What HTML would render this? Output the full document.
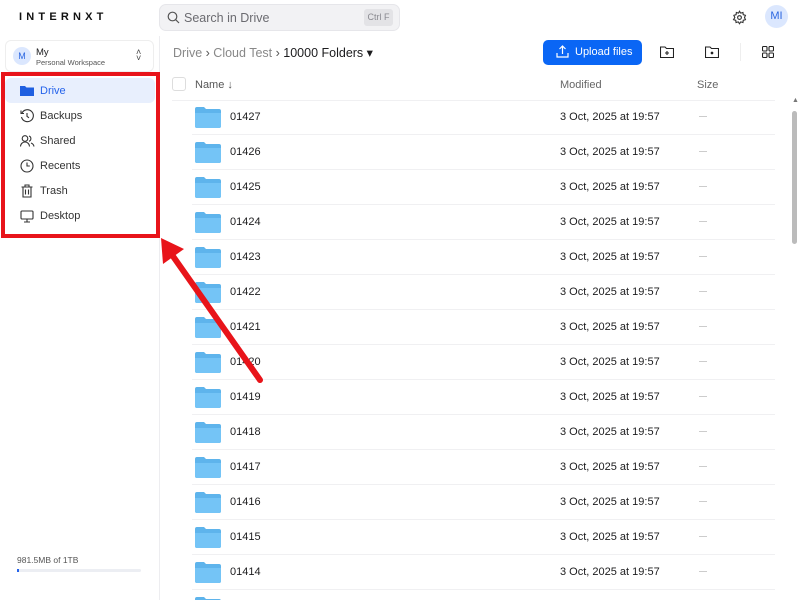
<!DOCTYPE html>
<html><head><meta charset="utf-8"><style>
*{box-sizing:border-box;margin:0;padding:0}
html,body{width:800px;height:600px;overflow:hidden}
body{background:#fff;font-family:"Liberation Sans",sans-serif;color:#1c1c1e;position:relative}
.abs{position:absolute}
.logo{left:19px;top:11px;font-size:11px;font-weight:bold;letter-spacing:4.2px;color:#111}
.search{left:159px;top:4px;width:241px;height:27px;background:#f2f2f4;border:1px solid #e6e6ea;border-radius:7px}
.search span{position:absolute;left:24px;top:6px;font-size:12.5px;color:#6b6b70}
.kbd{position:absolute;right:6px;top:4px;width:29px;height:17px;background:#e3e3e6;border-radius:3px;font-size:9px;color:#8a8a90;text-align:center;line-height:17px}
.ws{left:5px;top:40px;width:149px;height:32px;border:1px solid #eee;border-radius:6px}
.av{width:18px;height:18px;border-radius:50%;background:#dbe7fe;color:#2b66e0;font-size:9px;text-align:center;line-height:18px}
.nav{left:5px;width:150px;height:25px;font-size:11px;color:#333;}
.nav span{position:absolute;left:35px;top:7px}
.nav svg{position:absolute;left:15px;top:6px}
.row{left:192px;width:583px;height:35px;border-bottom:1px solid #f0f0f2}
.row .n{position:absolute;left:38px;top:11px;font-size:11px}
.row .m{position:absolute;left:368px;top:11px;font-size:11px}
.row .s{position:absolute;left:507px;top:16px;width:8px;height:1px;background:#ccc}
.row svg{position:absolute;left:3px;top:6px}
</style></head><body>
<div class="abs logo">INTERNXT</div>
<div class="abs search"><svg class="abs" style="left:7px;top:6px" width="13" height="13" viewBox="0 0 13 13"><circle cx="5.5" cy="5.5" r="4.3" fill="none" stroke="#555" stroke-width="1.2"/><path d="M8.7 8.7L12 12" stroke="#555" stroke-width="1.2"/></svg><span>Search in Drive</span><div class="kbd">Ctrl F</div></div>
<svg class="abs" style="left:732px;top:10px" width="15" height="15" viewBox="0 0 24 24" fill="none" stroke="#333" stroke-width="1.8"><circle cx="12" cy="12" r="3"/><path d="M12 2l2 3 3.5-1 .5 3.5 3.5 1-1.5 3.5 1.5 3.5-3.5 1-.5 3.5-3.5-1-2 3-2-3-3.5 1-.5-3.5-3.5-1L4.5 12 3 8.5l3.5-1L7 4l3.5 1z"/></svg>
<div class="abs av" style="left:765px;top:5px;width:23px;height:23px;line-height:23px;font-size:11px">MI</div>
<div class="abs" style="left:159px;top:36px;width:1px;height:564px;background:#ededf0"></div>
<div class="abs ws"><div class="abs av" style="left:7px;top:6px">M</div><div class="abs" style="left:30px;top:6px;font-size:9.5px">My</div><div class="abs" style="left:30px;top:17px;font-size:7.5px;color:#555">Personal Workspace</div><div class="abs" style="left:130px;top:8px;font-size:9px;color:#444;line-height:6px">˄<br>˅</div></div>
<div class="abs nav" style="top:78px;background:#e8effd;border-radius:6px;color:#2563eb"><svg width="14" height="13" viewBox="0 0 14 13"><path d="M0 2h5l1.5 1.5H14V12H0z" fill="#1f5fe0"/></svg><span>Drive</span></div>
<div class="abs nav" style="top:103px"><svg width="14" height="14" viewBox="0 0 14 14" fill="none" stroke="#333" stroke-width="1.1"><path d="M2 4a6 6 0 1 1-.5 4M1 1.5V4.5h3M7 4v3.3l2 1.5"/></svg><span>Backups</span></div>
<div class="abs nav" style="top:128px"><svg width="15" height="14" viewBox="0 0 15 14" fill="none" stroke="#333" stroke-width="1.1"><circle cx="5" cy="4.5" r="2.8"/><path d="M0.5 12.5a4.5 4.5 0 0 1 9 0M9 2a2.8 2.8 0 0 1 0 5.3M11 9a4.5 4.5 0 0 1 3 3.5"/></svg><span>Shared</span></div>
<div class="abs nav" style="top:153px"><svg width="14" height="14" viewBox="0 0 14 14" fill="none" stroke="#333" stroke-width="1.1"><circle cx="7" cy="7" r="6"/><path d="M7 3.5V7h2.8"/></svg><span>Recents</span></div>
<div class="abs nav" style="top:178px"><svg width="14" height="14" viewBox="0 0 14 14" fill="none" stroke="#333" stroke-width="1.1"><path d="M1.5 3h11M5 3V1h4v2M3 3v10h8V3M5.5 5.5v5M8.5 5.5v5"/></svg><span>Trash</span></div>
<div class="abs nav" style="top:203px"><svg width="14" height="14" viewBox="0 0 14 14" fill="none" stroke="#333" stroke-width="1.1"><rect x="1" y="2" width="12" height="8" rx="1"/><path d="M4 13h6M7 10v3"/></svg><span>Desktop</span></div>
<div class="abs" style="left:17px;top:555px;font-size:8.5px;color:#555">981.5MB of 1TB</div>
<div class="abs" style="left:17px;top:569px;width:124px;height:3px;background:#eceef3;border-radius:2px"><div style="width:2px;height:3px;background:#2563eb"></div></div>
<div class="abs" style="left:173px;top:45px;font-size:12.5px;color:#888">Drive <span style="color:#555">›</span> Cloud Test <span style="color:#555">›</span> <span style="color:#1c1c1e">10000 Folders ▾</span></div>
<div class="abs" style="left:543px;top:40px;width:99px;height:25px;background:#0a66f5;border-radius:5px;color:#fff;font-size:11px"><svg class="abs" style="left:13px;top:5px" width="13" height="13" viewBox="0 0 13 13" fill="none" stroke="#fff" stroke-width="1.2"><path d="M1 8v4h11V8M6.5 9V1M3.5 4l3-3 3 3"/></svg><span class="abs" style="left:32px;top:6px">Upload files</span></div>
<svg class="abs" style="left:660px;top:46px" width="14" height="12" viewBox="0 0 14 12" fill="none" stroke="#222" stroke-width="1.1"><path d="M.5 1h4.5l1.5 1.5h7v9H.5zM7 5v4M5 7h4"/></svg>
<svg class="abs" style="left:705px;top:46px" width="14" height="12" viewBox="0 0 14 12" fill="none" stroke="#222" stroke-width="1.1"><path d="M.5 1h4.5l1.5 1.5h7v9H.5z"/><circle cx="7" cy="7" r=".8" fill="#222"/></svg>
<div class="abs" style="left:740px;top:43px;width:1px;height:18px;background:#eee"></div>
<svg class="abs" style="left:762px;top:46px" width="12" height="12" viewBox="0 0 12 12" fill="none" stroke="#222" stroke-width="1.1"><rect x=".5" y=".5" width="4.5" height="4.5" rx="1"/><rect x="7" y=".5" width="4.5" height="4.5" rx="1"/><rect x=".5" y="7" width="4.5" height="4.5" rx="1"/><rect x="7" y="7" width="4.5" height="4.5" rx="1"/></svg>
<div class="abs" style="left:172px;top:77px;width:14px;height:14px;border:1px solid #ddd;border-radius:3px"></div>
<div class="abs" style="left:195px;top:79px;font-size:11px;color:#555">Name ↓</div>
<div class="abs" style="left:560px;top:79px;font-size:11px;color:#666">Modified</div>
<div class="abs" style="left:697px;top:79px;font-size:11px;color:#666">Size</div>
<div class="abs" style="left:172px;top:100px;width:603px;height:1px;background:#f0f0f2"></div>
<div class="abs" style="left:792px;top:97px;font-size:7px;color:#777">▲</div>
<div class="abs" style="left:792px;top:111px;width:5px;height:133px;background:#bbb;border-radius:3px"></div>
<div id="rows"></div>
<script>
var h='';for(var i=0;i<15;i++){var n=1427-i;h+='<div class="abs row" style="top:'+(100+i*35)+'px"><svg width="26" height="22" viewBox="0 0 26 22"><path d="M0 3a2 2 0 0 1 2-2h7l2 2h13a2 2 0 0 1 2 2v15a2 2 0 0 1-2 2H2a2 2 0 0 1-2-2z" fill="#5eb4ec"/><path d="M0 7h26v13a2 2 0 0 1-2 2H2a2 2 0 0 1-2-2z" fill="#74c4f6"/></svg><span class="n">0'+n+'</span><span class="m">3 Oct, 2025 at 19:57</span><i class="s"></i></div>'}
document.getElementById('rows').innerHTML=h;
</script>
<div class="abs" style="left:1px;top:72px;width:159px;height:166px;border:4px solid #e8141a"></div>
<svg class="abs" style="left:0;top:0" width="800" height="600"><line x1="260" y1="380" x2="170" y2="252" stroke="#e8141a" stroke-width="6" stroke-linecap="round"/><polygon points="161,238 163,264 184,249" fill="#e8141a"/></svg>
</body></html>
